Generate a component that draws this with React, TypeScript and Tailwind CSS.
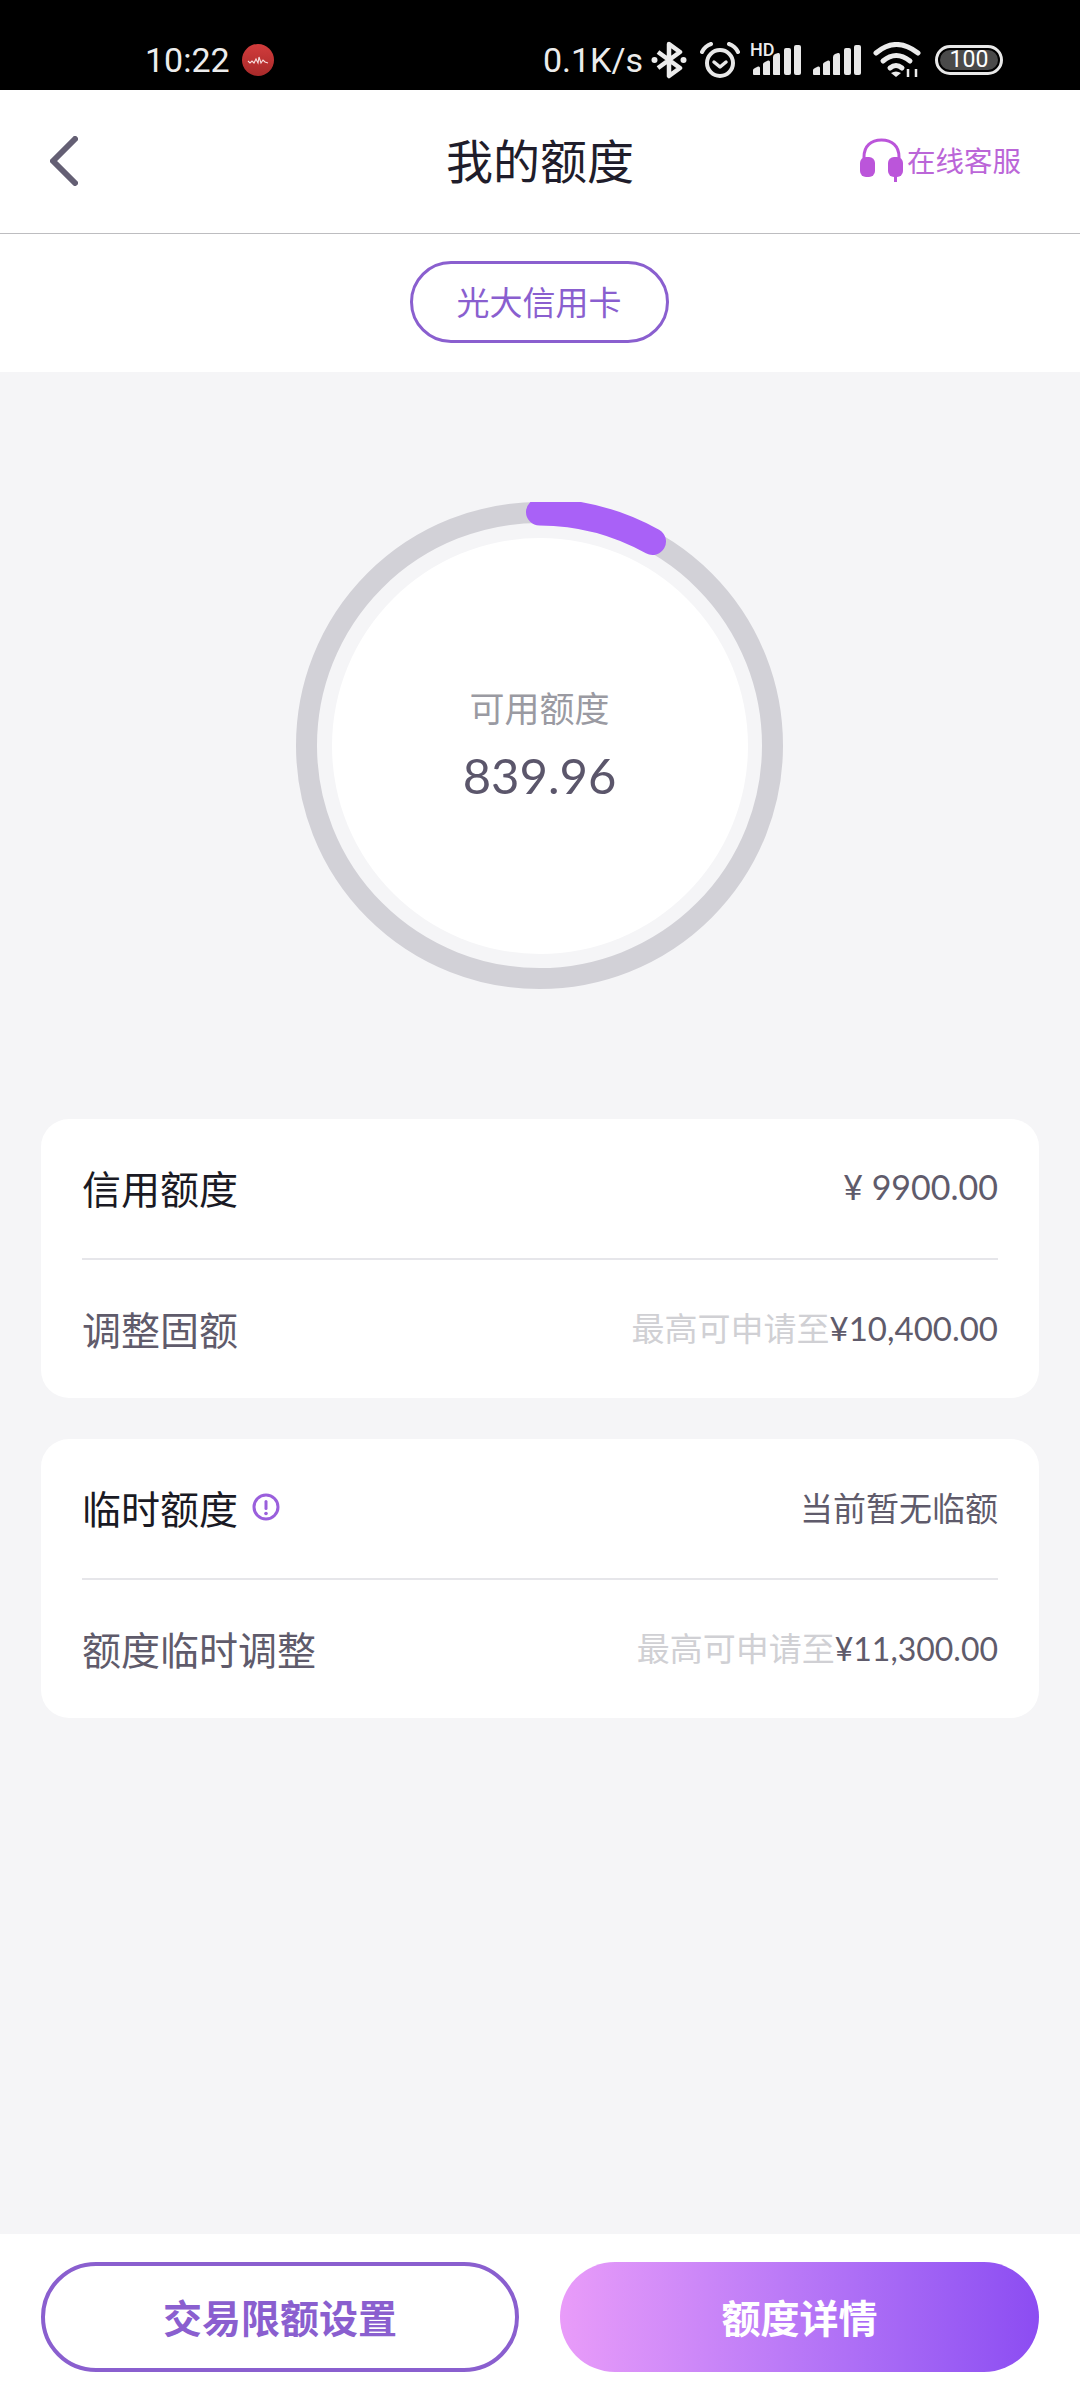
const CJK = { fontFamily: '"Noto Sans CJK SC", sans-serif' };

function Bars({ hd }: { hd?: boolean }) {
  return (
    <div className="relative w-[48px] h-[30px]">
      {hd && (
        <span className="absolute left-[-3px] top-[-4px] text-[18px] leading-[18px] font-medium text-[#ececec]" style={{ fontFamily: 'Roboto, sans-serif' }}>
          HD
        </span>
      )}
      <svg width="48" height="30" viewBox="0 0 48 30" className="absolute left-0 top-0" fill="#e8e8e8">
        <path d="M1 30 Q0 30 0 29 V25 Q0 24 2 23 L5 21.5 Q7 21 7 23 V30 Z" />
        <path d="M11 30 Q10 30 10 29 V19 Q10 18 12 17 L15 15.5 Q17 15 17 17 V30 Z" />
        <path d="M21 30 Q20 30 20 29 V12 Q20 10 22 9 L25 8 Q27 7.5 27 10 V30 Z" />
        <rect x="31" y="3" width="7" height="27" rx="2" />
        <rect x="41" y="0" width="7" height="30" rx="2" />
      </svg>
    </div>
  );
}

function StatusBar() {
  return (
    <div className="h-[90px] bg-black flex items-center justify-between pl-[145px] pr-[77px] pt-[29px] text-[#ececec]" style={{ fontFamily: 'Roboto, sans-serif' }}>
      <div className="flex items-center gap-[12px]">
        <span className="text-[34px] leading-[40px]">10:22</span>
        <svg width="32" height="32" viewBox="0 0 32 32">
          <defs>
            <linearGradient id="rec" x1="0" y1="0" x2="0" y2="1">
              <stop offset="0" stopColor="#d23c3c" />
              <stop offset="1" stopColor="#a82a2a" />
            </linearGradient>
          </defs>
          <circle cx="16" cy="16" r="16" fill="url(#rec)" />
          <path d="M6 17 l2 2 2-2 2 2 2-4 2 4 1-6 2 6 2-3 2 2 3 1" fill="none" stroke="#f7dede" strokeWidth="1.1" />
        </svg>
      </div>
      <div className="flex items-center">
        <span className="text-[34px] leading-[40px] mr-[8px]">0.1K/s</span>
        <svg width="36" height="38" viewBox="0 0 36 38" fill="none" stroke="#ececec" strokeWidth="4.5" className="mr-[13px]">
          <path d="M7 11 L29 27 L18 35 V3 L29 11 L7 27" strokeLinejoin="round" />
          <circle cx="3.5" cy="19" r="3" fill="#ececec" stroke="none" />
          <circle cx="32.5" cy="19" r="3" fill="#ececec" stroke="none" />
        </svg>
        <svg width="40" height="36" viewBox="0 0 40 36" fill="none" stroke="#e8e8e8" className="mr-[13px]">
          <circle cx="20" cy="21" r="13" strokeWidth="4" />
          <path d="M14 20 l6 5 6-5" strokeWidth="3.5" strokeLinecap="round" strokeLinejoin="round" />
          <path d="M2 10 Q5 4 11 2" strokeWidth="4" strokeLinecap="round" />
          <path d="M38 10 Q35 4 29 2" strokeWidth="4" strokeLinecap="round" />
        </svg>
        <Bars hd />
        <div className="w-[12px]" />
        <Bars />
        <svg width="48" height="36" viewBox="0 0 48 36" fill="none" stroke="#ececec" strokeWidth="5" className="ml-[12px] mr-[14px]" strokeLinecap="round">
          <path d="M3 11 Q23 -6 45 11" />
          <path d="M10 19 Q23 8 37 19" />
          <path d="M17 26 Q23 21 29 26" />
          <path d="M23 35 L18 31 Q23 28 28 31 Z" fill="#ececec" stroke="none" />
          <path d="M35 35 V27 M43 35 V27" strokeWidth="2.5" strokeLinecap="butt" />
        </svg>
        <div className="w-[68px] h-[30px] rounded-full border-[3px] border-[#e8e8e8] p-[2px] flex">
          <div className="flex-1 rounded-full bg-[#4a4a4a] flex items-center justify-center text-[23px] leading-none text-white">100</div>
        </div>
      </div>
    </div>
  );
}

function Header() {
  return (
    <div className="h-[144px] bg-white border-b border-[#bdbdc0] relative flex items-center justify-between pl-[50px] pr-[59px]">
      <svg width="28" height="50" viewBox="0 0 28 50" fill="none" stroke="#645f74" strokeWidth="6" strokeLinecap="round" strokeLinejoin="round" className="-mt-[2px]">
        <path d="M25 3 L3 25 L25 47" />
      </svg>
      <span className="absolute left-0 right-0 top-[39px] text-center text-[47px] leading-[60px] text-[#1f1d2b]">我的额度</span>
      <div className="flex items-center gap-[3px] -mt-[3px]">
        <svg width="45" height="44" viewBox="0 0 45 44" fill="none">
          <path d="M5 24 V19 C5 8 12 2 22.5 2 C33 2 40 8 40 19 V24" stroke="#bb55da" strokeWidth="3" />
          <rect x="1" y="19" width="15" height="20" rx="6" fill="#bb55da" />
          <rect x="29" y="19" width="15" height="20" rx="6" fill="#bb55da" />
          <rect x="35" y="36" width="3" height="8" fill="#bb55da" />
        </svg>
        <span className="text-[28.5px] leading-[40px] text-[#bb66d8]">在线客服</span>
      </div>
    </div>
  );
}

function Ring() {
  return (
    <div className="relative w-[487px] h-[487px] ml-[255px] rounded-full border-[21px] border-[#d2d1d7] bg-[#f5f5f7] flex items-center justify-center">
      <div className="w-[416px] h-[416px] rounded-full bg-white flex flex-col items-center pt-[146px]">
        <span className="text-[35px] leading-[46px] text-[#9a9aa2]">可用额度</span>
        <span className="text-[49px] leading-[64px] mt-[13px] text-[#5b566b]" style={{ fontFamily: 'Lato, sans-serif' }}>839.96</span>
      </div>
      <svg width="487" height="487" viewBox="0 0 487 487" className="absolute left-[-21px] top-[-21px]" fill="none">
        <path d="M243.5 10 A233.5 233.5 0 0 1 356.5 39.5" stroke="#a961f7" strokeWidth="27" strokeLinecap="round" />
      </svg>
    </div>
  );
}

function Row({ label, strong, children, icon }: { label: string; strong?: boolean; children: React.ReactNode; icon?: boolean }) {
  return (
    <div className={`h-[139px] flex items-center justify-between ${strong ? 'pb-[4px]' : ''}`}>
      <div className="flex items-center gap-[14px]">
        <span className={`text-[39px] leading-[50px] ${strong ? 'text-[#1a1a24]' : 'text-[#5f5b6b]'}`}>{label}</span>
        {icon && (
          <svg width="28" height="28" viewBox="0 0 28 28" fill="none">
            <circle cx="14" cy="14" r="12" stroke="#9a5fdc" strokeWidth="3" />
            <rect x="12.5" y="7" width="3" height="10" rx="1.5" fill="#9a5fdc" />
            <circle cx="14" cy="20.5" r="1.8" fill="#9a5fdc" />
          </svg>
        )}
      </div>
      {children}
    </div>
  );
}

function Num({ children }: { children: React.ReactNode }) {
  return <span className="text-[#5f5b6b]" style={{ fontFamily: 'Lato, "Noto Sans CJK SC", sans-serif' }}>{children}</span>;
}

function Card({ top, bottom }: { top: React.ReactNode; bottom: React.ReactNode }) {
  return (
    <div className="h-[279px] bg-white rounded-[28px] pl-[41px] pr-[41px]">
      {top}
      <div className="h-[2px] bg-[#e6e6ea] -mb-[2px] relative" />
      {bottom}
    </div>
  );
}

export default function App() {
  return (
    <div className="w-[1080px] h-[2400px] flex flex-col bg-[#f5f5f7]" style={CJK}>
      <StatusBar />
      <Header />
      <div className="h-[138px] bg-white flex items-center justify-center pb-[2px] pr-[2px]">
        <div className="w-[259px] h-[82px] rounded-full border-[3px] border-[#8a5fcf] flex items-center justify-center text-[33px] text-[#8a5fcf]">
          光大信用卡
        </div>
      </div>
      <div className="flex-1 px-[41px] pt-[130px] flex flex-col">
        <Ring />
        <div className="mt-[130px] flex flex-col gap-[41px]">
          <Card
            top={
              <Row label="信用额度" strong>
                <span className="text-[34px] leading-[44px]"><Num>¥ 9900.00</Num></span>
              </Row>
            }
            bottom={
              <Row label="调整固额">
                <span className="text-[33px] leading-[44px]">
                  <span className="text-[#d0d0d4]">最高可申请至</span>
                  <Num>¥10,400.00</Num>
                </span>
              </Row>
            }
          />
          <Card
            top={
              <Row label="临时额度" strong icon>
                <span className="text-[33px] leading-[44px] text-[#5f5b6b]">当前暂无临额</span>
              </Row>
            }
            bottom={
              <Row label="额度临时调整">
                <span className="text-[33px] leading-[44px]">
                  <span className="text-[#d0d0d4]">最高可申请至</span>
                  <span className="text-[32px]"><Num>¥11,300.00</Num></span>
                </span>
              </Row>
            }
          />
        </div>
      </div>
      <div className="h-[166px] bg-white px-[41px] pt-[28px] flex gap-[41px]">
        <div className="w-[478px] h-[110px] rounded-full border-[4px] border-[#8a5fcf] bg-white flex items-center justify-center pb-[2px] text-[39px] font-bold text-[#8a5fcf]">
          交易限额设置
        </div>
        <div className="w-[479px] h-[110px] rounded-full bg-gradient-to-r from-[#e99cf9] to-[#8c4cf2] flex items-center justify-center pb-[2px] text-[39px] font-bold text-white">
          额度详情
        </div>
      </div>
    </div>
  );
}
